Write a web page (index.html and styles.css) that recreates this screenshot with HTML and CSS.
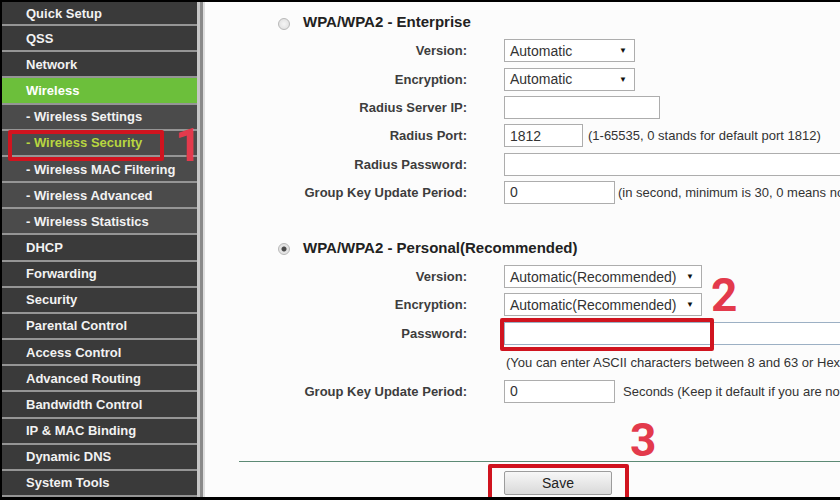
FILE: index.html
```html
<!DOCTYPE html>
<html lang="en">
<head>
    <meta charset="UTF-8">
    <title>Wireless Security</title>
    <link rel="stylesheet" href="styles.css">
</head>
<body>

<div class="frame">
    <!-- Left menu -->
    <ul class="menu">
        <li>Quick Setup</li>
        <li>QSS</li>
        <li>Network</li>
        <li class="active">Wireless</li>
        <li class="sub">- Wireless Settings</li>
        <li class="sub current">- Wireless Security</li>
        <li class="sub">- Wireless MAC Filtering</li>
        <li class="sub">- Wireless Advanced</li>
        <li class="sub">- Wireless Statistics</li>
        <li>DHCP</li>
        <li>Forwarding</li>
        <li>Security</li>
        <li>Parental Control</li>
        <li>Access Control</li>
        <li>Advanced Routing</li>
        <li>Bandwidth Control</li>
        <li>IP &amp; MAC Binding</li>
        <li>Dynamic DNS</li>
        <li>System Tools</li>
    </ul>

    <div class="divider"></div>

    <div class="content">
        <div class="section">
            <div class="mode"><span class="radio"></span>WPA/WPA2 - Enterprise</div>
            <div class="row">
                <label>Version:</label>
                <div class="field select select-short">Automatic<span class="arrow">&#9660;</span></div>
            </div>
            <div class="row">
                <label>Encryption:</label>
                <div class="field select select-short">Automatic<span class="arrow">&#9660;</span></div>
            </div>
            <div class="row">
                <label>Radius Server IP:</label>
                <div class="field ip"></div>
            </div>
            <div class="row">
                <label>Radius Port:</label>
                <div class="field port">1812</div>
                <span class="note">(1-65535, 0 stands for default port 1812)</span>
            </div>
            <div class="row">
                <label>Radius Password:</label>
                <div class="field wide"></div>
            </div>
            <div class="row">
                <label>Group Key Update Period:</label>
                <div class="field period">0</div>
                <span class="note note-tight">(in second, minimum is 30, 0 means no update)</span>
            </div>
        </div>

        <div class="section">
            <div class="mode"><span class="radio on"></span>WPA/WPA2 - Personal(Recommended)</div>
            <div class="row">
                <label>Version:</label>
                <div class="field select select-long">Automatic(Recommended)<span class="arrow">&#9660;</span></div>
            </div>
            <div class="row">
                <label>Encryption:</label>
                <div class="field select select-long">Automatic(Recommended)<span class="arrow">&#9660;</span></div>
            </div>
            <div class="row">
                <label>Password:</label>
                <div class="field wide password"></div>
            </div>
            <div class="hint-row">(You can enter ASCII characters between 8 and 63 or Hexadecimal characters between 8 and 64.)</div>
            <div class="row">
                <label>Group Key Update Period:</label>
                <div class="field period">0</div>
                <span class="note note-wide">Seconds (Keep it default if you are not sure, minimum is 30, 0 means no update)</span>
            </div>
        </div>

        <div class="rule"></div>
        <div class="actions">
            <button type="button" class="save">Save</button>
        </div>
    </div>

    <!-- Annotations -->
    <div class="mark mark-menu"></div>
    <div class="mark mark-pass"></div>
    <div class="mark mark-save"></div>
    <span class="step step-1">1</span>
    <span class="step step-2">2</span>
    <span class="step step-3">3</span>
</div>

</body>
</html>
```

FILE: styles.css
```css
body {
    margin: 0;
    font-family: "Liberation Sans", Arial, sans-serif;
    background: #000;
}

.frame {
    width: 840px;
    height: 500px;
    box-sizing: border-box;
    border-top: 2px solid #000;
    border-left: 2px solid #000;
    border-bottom: 3px solid #000;
    background: #fcfcfc;
    display: flex;
    position: relative;
    overflow: hidden;
}

/* Left menu */
.menu {
    width: 195px;
    flex: none;
    margin: 0;
    padding: 0;
    list-style: none;
    background: #3a3a3a;
}

.menu li {
    height: 24.17px;
    border-bottom: 2px solid #959595;
    padding-left: 24px;
    display: flex;
    align-items: center;
    font-size: 13px;
    font-weight: bold;
    color: #f2f2f2;
    white-space: nowrap;
}

.menu li:first-child {
    height: 22.17px;
}

.menu .active {
    background: #6cbf3b;
    color: #fff;
}

.menu .sub {
    background: #4b4b4b;
}

.menu .current {
    color: #b8d640;
}

.divider {
    width: 8px;
    flex: none;
    background: linear-gradient(to right, #c6c6c6 0 3px, #8a8a8a 3px 6px, #dedede 6px 8px);
}

/* Form area */
.content {
    flex: 1;
    padding-top: 5px;
    overflow: hidden;
    white-space: nowrap;
    color: #333;
}

.section + .section {
    margin-top: 26px;
}

.mode {
    height: 29.8px;
    display: flex;
    align-items: center;
    padding-left: 73px;
    font-size: 15px;
    font-weight: bold;
    color: #222;
}

.radio {
    width: 12px;
    height: 12px;
    box-sizing: border-box;
    border: 1px solid #b8b8b8;
    border-radius: 50%;
    background: radial-gradient(circle, #f5f5f5, #dcdcdc);
    margin-right: 13px;
    margin-top: 4px;
}

.radio.on {
    background: radial-gradient(circle, #4a4a4a 0 2px, #e4e4e4 3px);
}

.row {
    height: 28.3px;
    display: flex;
    align-items: center;
}

.row label {
    width: 262px;
    flex: none;
    margin-right: 37px;
    text-align: right;
    font-size: 13px;
    font-weight: bold;
    color: #3d3d3d;
}

.field {
    height: 23px;
    box-sizing: border-box;
    flex: none;
    display: flex;
    align-items: center;
    padding-left: 5px;
    border: 1px solid #adadad;
    background: #fff;
    font-size: 14px;
    color: #333;
}

.select {
    justify-content: space-between;
    padding-right: 7px;
}

.arrow {
    font-size: 8px;
    color: #111;
}

.select-short { width: 131px; }
.select-long { width: 198px; }
.ip { width: 156px; }
.port { width: 79px; }
.period { width: 111px; }
.wide { width: 400px; }

.password {
    border-color: #9cb0c4;
}

.note {
    margin-left: 5px;
    font-size: 13px;
    color: #333;
}

.note-tight { margin-left: 3px; }
.note-wide { margin-left: 8px; }

.hint-row {
    height: 30px;
    display: flex;
    align-items: center;
    padding-left: 301px;
    font-size: 13px;
    color: #333;
}

.rule {
    margin: 55px 0 0 34px;
    border-top: 1px solid #5d8a75;
}

.actions {
    margin-top: 9px;
    padding-left: 299px;
}

.save {
    width: 108px;
    height: 24px;
    border: 1px solid #9c9c9c;
    border-radius: 2px;
    background: linear-gradient(#f7f7f7, #d9d9d9);
    font-family: "Liberation Sans", Arial, sans-serif;
    font-size: 14px;
    color: #222;
    padding: 0;
}

/* Red annotations */
.mark {
    position: absolute;
    box-sizing: border-box;
    border: 4px solid #d0141f;
    border-radius: 2px;
}

.mark-menu { left: 6px; top: 128px; width: 156px; height: 31px; }
.mark-pass { left: 498px; top: 316px; width: 214px; height: 33px; }
.mark-save { left: 486px; top: 462px; width: 141px; height: 40px; }

.step {
    position: absolute;
    font-family: Roboto, sans-serif;
    font-weight: 700;
    font-size: 46px;
    line-height: 1;
    color: #e33a4c;
}

.step-1 { left: 173px; top: 120px; }
.step-2 { left: 709px; top: 270px; }
.step-3 { left: 628px; top: 415px; }
```
